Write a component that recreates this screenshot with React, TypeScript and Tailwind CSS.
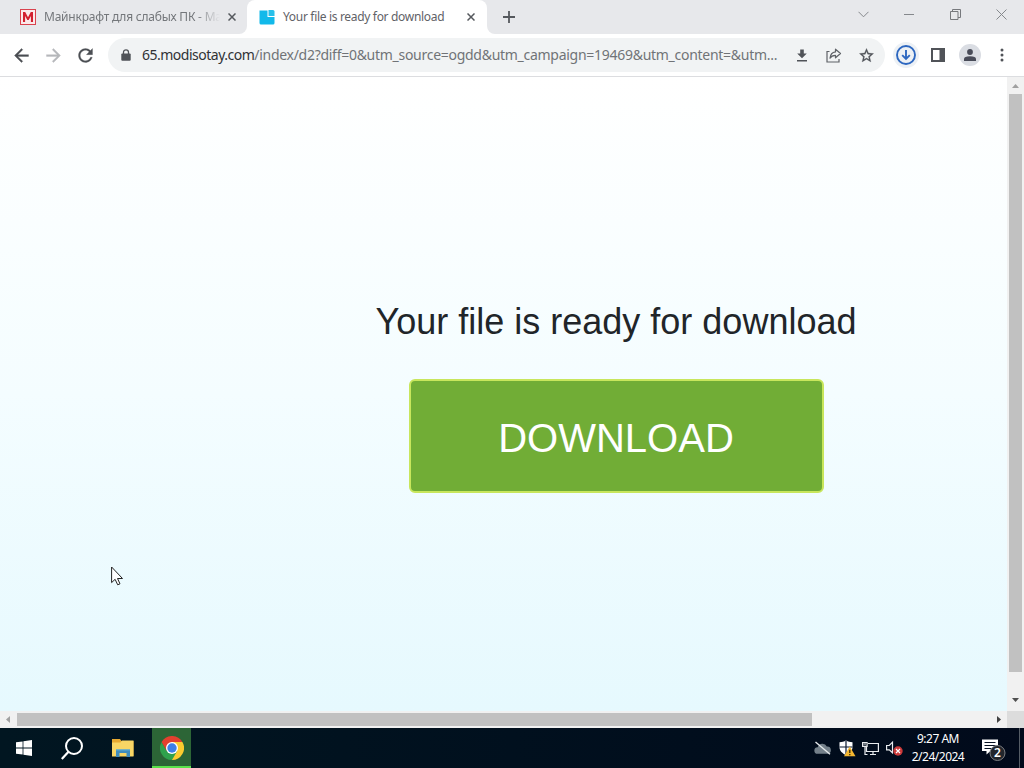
import React from "react";

const Arrow = ({ color, flip }: { color: string; flip?: boolean }) => (
  <svg width="21" height="21" viewBox="0 0 24 24" fill={color} className={flip ? "rotate-180" : ""}>
    <path d="M20 11H7.83l5.59-5.59L12 4l-8 8 8 8 1.41-1.41L7.83 13H20v-2z" stroke={color} strokeWidth=".4" />
  </svg>
);

const Cross = ({ size = 8, color = "#55585d", w = 1.5 }: { size?: number; color?: string; w?: number }) => (
  <svg width={size} height={size} viewBox={`0 0 ${size} ${size}`} stroke={color} strokeWidth={w}>
    <path d={`M.5 .5L${size - 0.5} ${size - 0.5}M${size - 0.5} .5L.5 ${size - 0.5}`} />
  </svg>
);

const Slot = ({ children }: { children: React.ReactNode }) => (
  <div className="flex h-8 w-8 shrink-0 items-center justify-center">{children}</div>
);

function TabStrip() {
  return (
    <div className="flex h-[34px] shrink-0 bg-white">
      <div className="flex w-[247px] shrink-0 items-center rounded-br-lg bg-[#e7e8eb] pl-5">
        <svg width="16" height="16" viewBox="0 0 16 16">
          <rect x=".5" y=".5" width="15" height="15" fill="#fbe9ea" stroke="#d9434e" />
          <path d="M3 13V3h2.2L8 8.2 10.8 3H13v10h-2.1V7L8.7 11H7.3L5.1 7v6z" fill="#d2202f" />
        </svg>
        <div className="ml-2 w-[176px] overflow-hidden whitespace-nowrap text-[12px] leading-[18px] tracking-[-0.22px] text-[#74777b] [mask-image:linear-gradient(to_right,black_86%,transparent)]">
          Майнкрафт для слабых ПК - Ма
        </div>
        <div className="ml-[8px] flex">
          <Cross />
        </div>
      </div>
      <div className="flex w-[240px] shrink-0 bg-[#e7e8eb]">
        <div className="flex h-full w-full items-center rounded-t-lg bg-white pl-3">
          <svg width="16" height="16" viewBox="0 0 16 16">
            <path d="M.5 1.500h8V8h7v6q0 1.500-1.500 1.500H2Q.5 15.500.5 14z" fill="#12b9ea" />
            <path d="M9.500 1H14q1.500 0 1.500 1.500V7h-6z" fill="#27c0ea" />
          </svg>
          <div className="ml-2 w-[170px] whitespace-nowrap text-[12px] leading-[18px] tracking-[-0.320px] text-[#5f6267]">
            Your file is ready for download
          </div>
          <div className="ml-[14px] flex">
            <Cross />
          </div>
        </div>
      </div>
      <div className="flex flex-1 rounded-bl-lg bg-[#e7e8eb]">
        <div className="flex w-11 items-center justify-center">
          <svg width="12" height="12" viewBox="0 0 12 12" stroke="#55585d" strokeWidth="1.800">
            <path d="M6 0v12M0 6h12" />
          </svg>
        </div>
        <div className="ml-auto flex h-[29px]">
          <div className="flex w-[46px] items-center justify-center">
            <svg width="11" height="7" viewBox="0 0 11 7" fill="none" stroke="#85888c">
              <path d="M.5 .8l5 5 5-5" />
            </svg>
          </div>
          <div className="flex w-[46px] items-center justify-center">
            <div className="h-px w-[10px] bg-[#85888c]" />
          </div>
          <div className="flex w-[46px] items-center justify-center">
            <svg width="11" height="11" viewBox="0 0 11 11" fill="none" stroke="#77797d">
              <path d="M.5 2.500h7.500v8H.5zM2.500 2.500v-2h8v8H8" />
            </svg>
          </div>
          <div className="flex w-[46px] items-center justify-center">
            <Cross size={11} color="#85888c" w={1} />
          </div>
        </div>
      </div>
    </div>
  );
}

function Toolbar() {
  return (
    <div className="flex h-[43px] shrink-0 items-center border-b border-[#dcdde0] bg-white pl-[5px]">
      <Slot><Arrow color="#4b4e53" /></Slot>
      <Slot><Arrow color="#b6b8bb" flip /></Slot>
      <Slot>
        <svg width="21" height="21" viewBox="0 0 24 24" fill="#4b4e53" stroke="#4b4e53" strokeWidth=".3">
          <path d="M17.650 6.350C16.200 4.900 14.210 4 12 4c-4.420 0-7.990 3.580-7.990 8s3.570 8 7.990 8c3.730 0 6.840-2.550 7.730-6h-2.080c-.82 2.330-3.040 4-5.650 4-3.310 0-6-2.690-6-6s2.690-6 6-6c1.660 0 3.140.69 4.220 1.780L13 11h7V4l-2.350 2.350z" />
        </svg>
      </Slot>
      <div className="ml-[7px] flex h-[34px] w-[777px] shrink-0 items-center rounded-full bg-[#f1f3f4] pl-[13px] pr-[3px]">
        <svg width="10" height="12" viewBox="0 0 10 12" className="shrink-0">
          <rect x=".3" y="4.500" width="9.400" height="7.300" rx="1" fill="#505358" />
          <path d="M2.500 5V3.300a2.500 2.500 0 0 1 5 0V5" fill="none" stroke="#505358" strokeWidth="1.300" />
        </svg>
        <div className="ml-[11px] w-[644px] shrink-0 whitespace-nowrap text-[14px] leading-5 tracking-[-0.280px] text-[#707377]">
          <span className="tracking-[-0.500px] text-[#303235]">65.modisotay.com</span>
          /index/d2?diff=0&amp;utm_source=ogdd&amp;utm_campaign=19469&amp;utm_content=&amp;utm...
        </div>
        <Slot>
          <svg width="10" height="13" viewBox="0 0 10 13" fill="#505358">
            <path d="M3.200 .5h3.600v4h3L5 9.300.2 4.500h3zM0 11h10v1.500H0z" />
          </svg>
        </Slot>
        <Slot>
          <svg width="16" height="15" viewBox="0 0 16 15" fill="none" stroke="#5f6267" strokeWidth="1.200">
            <path d="M3.500 3.500H1v10.500h12v-3" />
            <path d="M9.500 1.200l5 4.300-5 4.300V7.300C6.700 7.300 5 8.300 4 10.200c.3-3.300 2-5.800 5.500-6.300z" strokeLinejoin="round" />
          </svg>
        </Slot>
        <Slot>
          <svg width="17" height="17" viewBox="0 0 24 24" fill="#505358" stroke="#505358" strokeWidth=".4">
            <path d="M22 9.240l-7.190-.62L12 2 9.190 8.630 2 9.240l5.460 4.730L5.820 21 12 17.270 18.180 21l-1.630-7.030L22 9.240zM12 15.400l-3.760 2.270 1-4.280-3.320-2.880 4.380-.38L12 6.100l1.710 4.040 4.380.38-3.320 2.880 1 4.280L12 15.400z" />
          </svg>
        </Slot>
      </div>
      <div className="ml-[5px] flex">
        <Slot>
          <div className="flex h-[26px] w-[26px] items-center justify-center rounded-full bg-[#edf1f5]">
            <svg width="20" height="20" viewBox="0 0 20 20" fill="none" stroke="#2d67c0" strokeWidth="1.900">
              <circle cx="10" cy="10" r="9" />
              <path d="M10 5v8.800M6.200 10.200L10 14l3.800-3.800" />
            </svg>
          </div>
        </Slot>
        <Slot>
          <svg width="14" height="14" viewBox="0 0 14 14" fill="#505358">
            <path fillRule="evenodd" d="M0 0h14v14H0zM2 2v10h6.500V2z" />
          </svg>
        </Slot>
        <Slot>
          <div className="flex h-[22px] w-[22px] items-center justify-center rounded-full bg-[#dadde3]">
            <svg width="12" height="12" viewBox="0 0 12 12" fill="#484b58">
              <circle cx="6" cy="3" r="2.900" />
              <path d="M0 12V10q0-2.800 6-2.800T12 10v2z" />
            </svg>
          </div>
        </Slot>
        <Slot>
          <svg width="4" height="14" viewBox="0 0 4 14" fill="#505358">
            <circle cx="2" cy="2" r="1.500" />
            <circle cx="2" cy="7" r="1.500" />
            <circle cx="2" cy="12" r="1.500" />
          </svg>
        </Slot>
      </div>
    </div>
  );
}

function Page() {
  return (
    <div className="grid min-h-0 flex-1 grid-cols-[1fr_17px] grid-rows-[1fr_17px]">
      <div className="flex flex-col items-center bg-linear-to-b from-white via-[#f4fdff] to-[#e6f9fe] pl-[225px] font-['Liberation_Sans',Arial,sans-serif]">
        <h1 className="mt-[223px] whitespace-nowrap text-[36px] leading-[44px] text-[#212529]">
          Your file is ready for download
        </h1>
        <button className="mt-[35px] h-[114px] w-[415px] rounded-[6px] border-2 border-[#c8e65c] bg-[#71ad36] pt-[4px] text-[40px] leading-none text-white">
          DOWNLOAD
        </button>
      </div>
      <div className="flex flex-col items-center bg-[#f1f1f1]">
        <div className="flex h-[17px] shrink-0 items-center">
          <svg width="7" height="4" viewBox="0 0 7 4" fill="#a0a0a0"><path d="M0 4L3.500 0 7 4z" /></svg>
        </div>
        <div className="h-[578px] w-[13px] bg-[#c1c1c1]" />
        <div className="mt-auto flex h-[19px] items-center pb-1">
          <svg width="7" height="4" viewBox="0 0 7 4" fill="#505050"><path d="M0 0h7L3.500 4z" /></svg>
        </div>
      </div>
      <div className="flex items-center bg-[#f1f1f1]">
        <div className="flex w-[17px] justify-center pr-px">
          <svg width="4" height="7" viewBox="0 0 4 7" fill="#a0a0a0"><path d="M4 0v7L0 3.500z" /></svg>
        </div>
        <div className="h-[13px] w-[795px] bg-[#c1c1c1]" />
        <div className="ml-auto flex w-[17px] justify-center">
          <svg width="4" height="7" viewBox="0 0 4 7" fill="#404040"><path d="M0 0v7l4-3.500z" /></svg>
        </div>
      </div>
      <div className="bg-[#dcdcdc]" />
    </div>
  );
}

function Taskbar() {
  return (
    <div className="flex h-10 shrink-0 items-center bg-linear-to-r from-[#011621] to-[#010a1b] text-white">
      <div className="flex w-12 justify-center">
        <svg width="16" height="16" viewBox="0 0 16 16" fill="#fff">
          <path d="M0 2.300l6.600-.9v6.200H0zM7.400 1.300L16 0v7.600H7.400zM0 8.400h6.600v6.200L0 13.700zM7.400 8.400H16V16l-8.600-1.300z" />
        </svg>
      </div>
      <div className="flex w-12 justify-center">
        <svg width="22" height="23" viewBox="0 0 22 23" fill="none" stroke="#fff">
          <circle cx="13" cy="9" r="8" strokeWidth="2" />
          <path d="M7.500 14.700L.8 22" strokeWidth="2.200" />
        </svg>
      </div>
      <div className="ml-2 flex w-12 pl-2">
        <svg width="22" height="19" viewBox="0 0 22 19">
          <path d="M0 0h8l1.500 2H21.500v15H0z" fill="#e6a931" />
          <path d="M0 3.500h8.500L10 1.500h11.500V17.500H0z" fill="#f8d665" />
          <path d="M4 11h14v7h-3.500v-4h-7v4H4z" fill="#3f8dbd" />
          <path d="M4 10.200h14v1.300H4z" fill="#5aaad4" />
        </svg>
      </div>
      <div className="flex h-10 w-[39px] items-center justify-center border-b-2 border-[#5ae24b] bg-[#2c6536] pt-px">
        <svg width="24" height="24" viewBox="0 0 24 24">
          <path d="M12 12V6h10.400A12 12 0 0 1 12 24z" fill="#fccb2f" />
          <path d="M12 12l5.200 3L12 24A12 12 0 0 1 1.600 6l5.200 9z" fill="#2fa14c" />
          <path d="M1.600 6A12 12 0 0 1 22.400 6H12L6.800 15z" fill="#e2402f" />
          <circle cx="12" cy="12" r="6" fill="#fff" />
          <circle cx="12" cy="12" r="4.700" fill="#3d7fe8" />
        </svg>
      </div>
      <div className="ml-auto flex items-center">
        <svg width="17" height="14" viewBox="0 0 17 14">
          <path d="M3.500 12.800a3.300 3.300 0 0 1 .3-6.600 4.800 4.800 0 0 1 9-.6 3.600 3.600 0 0 1 .8 7.200z" fill="#74808a" />
          <path d="M1.500 1L16 13.300" stroke="#e5e9ec" strokeWidth="1.400" />
        </svg>
        <svg width="17" height="17" viewBox="0 0 17 17" className="ml-2">
          <path d="M7 .5c2 1.300 4 1.700 6.500 1.700V7c0 4-3 6.500-6.500 8C3.500 13.500.5 11 .5 7V2.200C3 2.200 5 1.800 7 .5z" fill="#fff" />
          <path d="M7 1v13M.5 7h13" stroke="#0a1830" strokeWidth="1.200" />
          <path d="M10.800 6.500L16.500 16.200H5z" fill="#f5b730" />
          <path d="M10.800 9.700v3.300M10.800 14v1.200" stroke="#33270a" strokeWidth="1.300" />
        </svg>
        <svg width="17" height="15" viewBox="0 0 17 15" fill="none" stroke="#e8ebee" strokeWidth="1.200" className="ml-[6px]">
          <path d="M6 2.500h10.400v8H4.500V6M8 13.500h6M11 10.500v3M3 6v7.500h2.500" />
          <path d="M.6 1.500h4.500v3.800H.6zM1.500 3h2.500" />
        </svg>
        <svg width="17" height="16" viewBox="0 0 17 16" fill="none" className="ml-[7px]">
          <path d="M.6 5.500h2.700L6.500 2.200v10.600L3.300 9.800H.6z" stroke="#e8ebee" strokeWidth="1.200" />
          <circle cx="12" cy="11" r="4.700" fill="#cc3a3a" />
          <path d="M10 9l4 4M14 9l-4 4" stroke="#fff" strokeWidth="1.200" />
        </svg>
        <div className="ml-[6px] w-[58px] whitespace-nowrap text-center text-[12px] leading-[18px] tracking-[-0.500px]">
          <div>9:27 AM</div>
          <div>2/24/2024</div>
        </div>
        <div className="ml-[14px] flex w-[26px]">
          <svg width="26" height="26" viewBox="0 0 26 26">
            <path d="M1 4.500h16V16H9.500L5.500 19.500V16H1z" fill="#fff" />
            <path d="M3.500 7.500h11M3.500 10.500h11M3.500 13.500h8" stroke="#071224" strokeWidth="1.200" />
            <circle cx="16.500" cy="18" r="7.500" fill="#22262c" stroke="#7c7f83" />
            <text x="16.500" y="22.300" textAnchor="middle" fontSize="12" fontWeight="600" fill="#fff" fontFamily="Noto Sans, sans-serif">2</text>
          </svg>
        </div>
        <div className="ml-[12px] mr-1 h-10 w-px bg-[#555d66]" />
      </div>
    </div>
  );
}

export default function App() {
  return (
    <div className="relative flex h-[768px] w-[1024px] flex-col overflow-hidden bg-white font-['Noto_Sans',sans-serif]">
      <TabStrip />
      <Toolbar />
      <Page />
      <Taskbar />
      <svg width="12" height="20" viewBox="0 0 12 20" className="absolute left-[111px] top-[566px]">
        <path d="M.6 1v15.600l3.500-3.300 2.600 5.500 2.300-1-2.500-5.300h5z" fill="#fff" stroke="#222" strokeWidth="1" />
      </svg>
    </div>
  );
}
